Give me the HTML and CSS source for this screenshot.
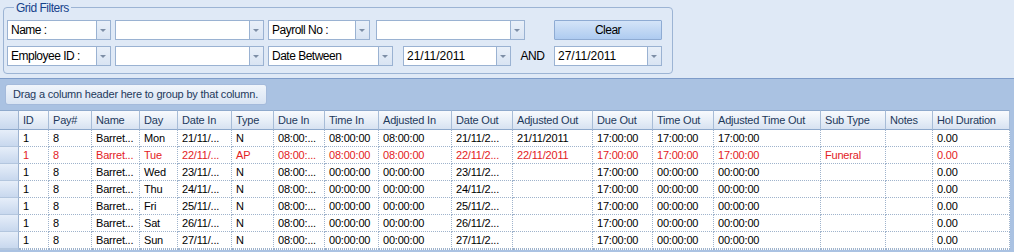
FILE: index.html
```html
<!DOCTYPE html>
<html lang="en">
  <head>
    <meta charset="UTF-8" />
    <title>Timesheet Grid</title>
    <link rel="stylesheet" href="styles.css">
  </head>
  <body>
    <div class="filters">
      <fieldset class="filter-group">
        <legend>Grid Filters</legend>
        <div class="filter-row">
          <div class="combo field-combo"><span class="combo-text">Name :</span><span class="combo-btn"></span></div>
          <div class="combo value-combo"><span class="combo-text"></span><span class="combo-btn"></span></div>
          <div class="combo payroll-combo"><span class="combo-text">Payroll No :</span><span class="combo-btn"></span></div>
          <div class="combo value-combo payroll-value"><span class="combo-text"></span><span class="combo-btn"></span></div>
          <button type="button" class="clear-btn">Clear</button>
        </div>
        <div class="filter-row">
          <div class="combo field-combo"><span class="combo-text">Employee ID :</span><span class="combo-btn"></span></div>
          <div class="combo value-combo"><span class="combo-text"></span><span class="combo-btn"></span></div>
          <div class="combo range-combo"><span class="combo-text">Date Between</span><span class="combo-btn"></span></div>
          <div class="combo date-combo date-from"><span class="combo-text">21/11/2011</span><span class="combo-btn"></span></div>
          <span class="and-label">AND</span>
          <div class="combo date-combo"><span class="combo-text">27/11/2011</span><span class="combo-btn"></span></div>
        </div>
      </fieldset>
    </div>

    <div class="group-panel">
      <div class="group-hint">Drag a column header here to group by that column.</div>
    </div>

    <table class="grid">
      <colgroup>
        <col style="width:19px"><col style="width:30px"><col style="width:43px"><col style="width:48px">
        <col style="width:38px"><col style="width:54px"><col style="width:42px"><col style="width:51px">
        <col style="width:54px"><col style="width:73px"><col style="width:61px"><col style="width:80px">
        <col style="width:60px"><col style="width:61px"><col style="width:107px"><col style="width:65px">
        <col style="width:47px"><col style="width:77px">
      </colgroup>
      <thead>
        <tr>
          <th class="indicator"></th>
          <th>ID</th><th>Pay#</th><th>Name</th><th>Day</th><th>Date In</th><th>Type</th>
          <th>Due In</th><th>Time In</th><th>Adjusted In</th><th>Date Out</th><th>Adjusted Out</th>
          <th>Due Out</th><th>Time Out</th><th>Adjusted Time Out</th><th>Sub Type</th><th>Notes</th><th>Hol Duration</th>
        </tr>
      </thead>
      <tbody>
        <tr>
          <td class="indicator"></td>
          <td>1</td><td>8</td><td>Barret...</td><td>Mon</td><td>21/11/...</td><td>N</td>
          <td>08:00:...</td><td>08:00:00</td><td>08:00:00</td><td>21/11/2...</td><td>21/11/2011</td>
          <td>17:00:00</td><td>17:00:00</td><td>17:00:00</td><td></td><td></td><td>0.00</td>
        </tr>
        <tr class="absent">
          <td class="indicator"></td>
          <td>1</td><td>8</td><td>Barret...</td><td>Tue</td><td>22/11/...</td><td>AP</td>
          <td>08:00:...</td><td>08:00:00</td><td>08:00:00</td><td>22/11/2...</td><td>22/11/2011</td>
          <td>17:00:00</td><td>17:00:00</td><td>17:00:00</td><td>Funeral</td><td></td><td>0.00</td>
        </tr>
        <tr>
          <td class="indicator"></td>
          <td>1</td><td>8</td><td>Barret...</td><td>Wed</td><td>23/11/...</td><td>N</td>
          <td>08:00:...</td><td>00:00:00</td><td>00:00:00</td><td>23/11/2...</td><td></td>
          <td>17:00:00</td><td>00:00:00</td><td>00:00:00</td><td></td><td></td><td>0.00</td>
        </tr>
        <tr>
          <td class="indicator"></td>
          <td>1</td><td>8</td><td>Barret...</td><td>Thu</td><td>24/11/...</td><td>N</td>
          <td>08:00:...</td><td>00:00:00</td><td>00:00:00</td><td>24/11/2...</td><td></td>
          <td>17:00:00</td><td>00:00:00</td><td>00:00:00</td><td></td><td></td><td>0.00</td>
        </tr>
        <tr>
          <td class="indicator"></td>
          <td>1</td><td>8</td><td>Barret...</td><td>Fri</td><td>25/11/...</td><td>N</td>
          <td>08:00:...</td><td>00:00:00</td><td>00:00:00</td><td>25/11/2...</td><td></td>
          <td>17:00:00</td><td>00:00:00</td><td>00:00:00</td><td></td><td></td><td>0.00</td>
        </tr>
        <tr>
          <td class="indicator"></td>
          <td>1</td><td>8</td><td>Barret...</td><td>Sat</td><td>26/11/...</td><td>N</td>
          <td>08:00:...</td><td>00:00:00</td><td>00:00:00</td><td>26/11/2...</td><td></td>
          <td>17:00:00</td><td>00:00:00</td><td>00:00:00</td><td></td><td></td><td>0.00</td>
        </tr>
        <tr>
          <td class="indicator"></td>
          <td>1</td><td>8</td><td>Barret...</td><td>Sun</td><td>27/11/...</td><td>N</td>
          <td>08:00:...</td><td>00:00:00</td><td>00:00:00</td><td>27/11/2...</td><td></td>
          <td>17:00:00</td><td>00:00:00</td><td>00:00:00</td><td></td><td></td><td>0.00</td>
        </tr>
        <tr>
          <td class="indicator"></td>
          <td></td><td></td><td></td><td></td><td></td><td></td><td></td><td></td><td></td>
          <td></td><td></td><td></td><td></td><td></td><td></td><td></td><td></td>
        </tr>
      </tbody>
    </table>
  </body>
</html>
```

FILE: styles.css
```css
body {
  margin: 0;
  padding: 0;
  font-family: "Liberation Sans", Arial, sans-serif;
  font-size: 11px;
  letter-spacing: -0.2px;
  color: #000;
  background: #aac2e2;
  overflow: hidden;
}

/* filter panel */

.filters {
  height: 79px;
  box-sizing: border-box;
  padding: 0 0 0 3px;
  background: #dfe9f6;
  border-bottom: 1px solid #7e9cc9;
}

.filter-group {
  width: 670px;
  box-sizing: border-box;
  margin: 0;
  padding: 6px 3px 7px;
  border: 1px solid #9cb4d4;
  border-radius: 4px;
  font-size: 12px;
  letter-spacing: -0.5px;
}

.filter-group legend {
  margin-left: 7px;
  padding: 3px 2px 0;
  line-height: 11px;
  color: #15428b;
}

.filter-row {
  display: flex;
  align-items: center;
  height: 20px;
}

.filter-row + .filter-row {
  margin-top: 6px;
}

.combo {
  display: flex;
  height: 20px;
  box-sizing: border-box;
  border: 1px solid #9ab2d2;
  background: #fff;
  margin-right: 4px;
}

.combo-text {
  flex: 1;
  padding-left: 3px;
  line-height: 18px;
  white-space: nowrap;
  overflow: hidden;
}

.combo-btn {
  position: relative;
  width: 13px;
  border-left: 1px solid #9ab2d2;
  background: linear-gradient(#e9f0f9, #d9e4f3);
}

.combo-btn::after {
  content: "";
  position: absolute;
  left: 3px;
  top: 8px;
  border-left: 3px solid transparent;
  border-right: 3px solid transparent;
  border-top: 3px solid #7d8ea6;
}

.field-combo { width: 104px; }
.value-combo { width: 149px; }
.payroll-combo { width: 102px; margin-right: 6px; }
.payroll-value { margin-right: 29px; }
.range-combo { width: 125px; margin-right: 10px; }
.date-combo { width: 108px; margin-right: 0; letter-spacing: 0; }

.and-label {
  width: 43px;
  text-align: center;
}

.clear-btn {
  width: 108px;
  height: 20px;
  padding: 0;
  font-family: inherit;
  font-size: 12px;
  letter-spacing: -0.5px;
  color: #000;
  border: 1px solid #8eabd3;
  border-radius: 1px;
  background: linear-gradient(#d4e4f8, #aecbf0);
}

/* group by panel */

.group-panel {
  height: 31px;
  box-sizing: border-box;
  padding: 5px 0 0 5px;
}

.group-hint {
  display: inline-block;
  width: 262px;
  height: 21px;
  box-sizing: border-box;
  padding-left: 7px;
  line-height: 19px;
  white-space: nowrap;
  color: #1e395b;
  border: 1px solid #a4badb;
  border-radius: 3px;
  background: linear-gradient(#f0f5fb, #d9e4f3);
}

/* grid */

.grid {
  width: 1010px;
  table-layout: fixed;
  border-collapse: separate;
  border-spacing: 0;
  background: #fff;
}

.grid th {
  padding: 0 4px;
  line-height: 18px;
  font-weight: normal;
  text-align: left;
  color: #1e395b;
  white-space: nowrap;
  overflow: hidden;
  border-top: 1px solid #8ea9cc;
  border-bottom: 1px solid #8ea9cc;
  border-right: 1px solid #a7bcd7;
  background: linear-gradient(#f8fafd, #e8eff8 50%, #d7e2f1);
}

.grid td {
  padding: 0 4px;
  line-height: 16px;
  white-space: nowrap;
  overflow: hidden;
  border-right: 1px dotted #9fb3cc;
  border-bottom: 1px dotted #9fb3cc;
}

.grid .indicator {
  padding: 0;
  border-right: 1px solid #9db3d0;
  border-bottom: 1px solid #b3c6de;
  background: linear-gradient(#e6eef9, #c8d8ee);
}

.grid th.indicator {
  border-bottom: 1px solid #8ea9cc;
}

.grid tr.absent td {
  color: #e3211e;
}
```
